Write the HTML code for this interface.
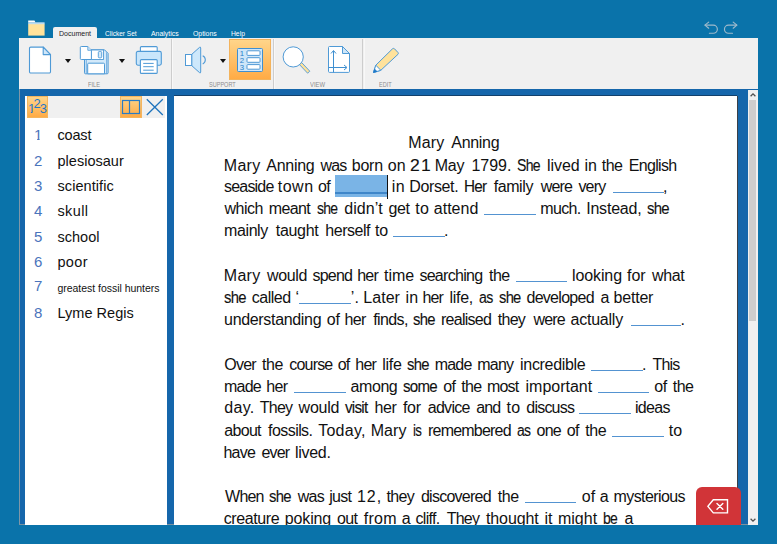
<!DOCTYPE html>
<html lang="en"><head><meta charset="utf-8"><title>Clicker - Mary Anning</title>
<style>
html,body{margin:0;padding:0}
body{width:777px;height:544px;overflow:hidden;background:#0a73aa;position:relative;font-family:"Liberation Sans",sans-serif}
*{box-sizing:border-box}
.abs{position:absolute}
#ribbon{position:absolute;left:19px;top:38px;width:739px;height:51px;background:#f0f0f0}
#main{position:absolute;left:18.600px;top:89px;width:739.400px;height:436.200px;background:#1566ab;border-left:1.300px solid #7f97a8;border-bottom:.8px solid #7890a0}
.tab{transform-origin:0 0;position:absolute;top:28.800px;font-size:7.5px;line-height:10px;color:#fff;white-space:pre}
#tabdoc{position:absolute;left:53px;top:27px;width:44px;height:12px;background:#f0f0f0;border-radius:2px 2px 0 0}
.glabel{position:absolute;top:80.900px;font-size:6.800px;line-height:8px;color:#8c8c8c;white-space:pre;transform-origin:0 0}
.sep{position:absolute;top:38.600px;width:2.500px;height:50.400px;border-left:1.500px solid #cdcdcd;border-right:1px solid #f8f8f8}
.dd{position:absolute;top:59px;width:0;height:0;border-left:3px solid transparent;border-right:3px solid transparent;border-top:4px solid #111}
#obtn{position:absolute;left:229px;top:38.900px;width:42.200px;height:41.500px;background:linear-gradient(#ffd58a,#ffab45);border:1px solid #f3b35c}
#panel{position:absolute;left:24.600px;top:96px;width:142.400px;height:428.600px;background:#fff;overflow:hidden}
#phead{position:absolute;left:2.400px;top:0;width:138px;height:21.700px;background:#f0f0f0}
.ob{position:absolute;top:0;height:21.700px;background:linear-gradient(#ffd58a,#ffab45);border:1px solid #f5b55e}
#page{position:absolute;left:174.400px;top:95px;width:562.900px;height:429.600px;background:#fff;overflow:hidden;box-shadow:inset 0 1px 0 #12406b}
#pshadow{position:absolute;left:737.300px;top:96px;width:1.200px;height:428.600px;background:#3a4048}
#sb{position:absolute;left:747.600px;top:89.700px;width:10.400px;height:434.900px;background:#f0f0f0}
#thumb{position:absolute;left:1px;top:10px;width:7px;height:221px;background:#cdcdcd}
.t{position:absolute;white-space:pre;font-size:16px;line-height:20px;color:#111;transform-origin:0 0}
.b{position:absolute;height:1.400px;background:#5393d1}
.sel{position:absolute;height:21.5px;background:#7ab4e6}
.cur{position:absolute;width:1.3px;height:24px;background:#111}
.n{position:absolute;left:9.100px;width:9px;text-align:center;font-size:15px;line-height:18px;color:#4a74bc}
.n1{clip-path:polygon(0 0,9px 0,9px 12.900px,5.900px 12.900px,5.900px 18px,3.500px 18px,3.500px 12.900px,0 12.900px)}
.one{position:absolute;left:.9px;top:4.500px;font-size:13px;line-height:16px;color:#1f78c8;clip-path:polygon(0 0,8px 0,8px 11.400px,4.700px 11.400px,4.700px 16px,3px 16px,3px 11.400px,0 11.400px)}
.w{position:absolute;left:32.900px;white-space:pre;line-height:18px;color:#111}
#del{position:absolute;left:696px;top:487px;width:45px;height:38px;background:#d13438;border-radius:6px 6px 0 0}
</style></head><body>

<!-- folder icon -->
<svg class="abs" style="left:27px;top:20px" width="19" height="17" viewBox="0 0 19 17">
<rect x="1.200" y="3.800" width="16.400" height="11.800" fill="#ffe29b"/>
<path d="M1.200 0.600h6.300l1 1.800H1.200z" fill="#fff"/>
<rect x="1.200" y="2.300" width="16.400" height="1.900" fill="#b9dcf2"/>
</svg>

<div id="tabdoc"></div>
<span class="tab" style="left:59.2px;color:#1c1c1c;transform:scaleX(.936)">Document</span>
<span class="tab" style="left:105.3px;transform:scaleX(.874)">Clicker Set</span>
<span class="tab" style="left:151px;transform:scaleX(.923)">Analytics</span>
<span class="tab" style="left:193px;transform:scaleX(.917)">Options</span>
<span class="tab" style="left:230.8px;transform:scaleX(.900)">Help</span>

<!-- undo / redo -->
<svg class="abs" style="left:703px;top:20px" width="36" height="15" viewBox="0 0 36 15" fill="none" stroke="#9fbacb" stroke-width="1.150" stroke-linecap="round" stroke-linejoin="round">
<path d="M5.700 2.100 L1.900 5.100 L5.700 8.200"/><path d="M2.100 5.100 H10.300 A4.050 4.050 0 0 1 10.300 13.200 H6.400"/>
<path d="M30.200 2.100 L33.900 5.100 L30.200 8.200"/><path d="M33.700 5.100 H25.500 A4.050 4.050 0 0 0 25.500 13.200 H29.500"/>
</svg>

<div id="ribbon"></div>
<div id="main"></div>

<!-- RIBBON ICONS -->
<!-- new document -->
<svg class="abs" style="left:28px;top:46px" width="24" height="28" viewBox="0 0 24 28">
<path d="M2.700 1.100H15.200l7.300 7.500V25.800a1.200 1.200 0 0 1-1.200 1.200H2.700a1.200 1.200 0 0 1-1.200-1.200V2.300a1.200 1.200 0 0 1 1.200-1.200z" fill="#fff" stroke="#4f9ad6" stroke-width="1.100"/>
<path d="M15.200 1.100V8.600H22.500z" fill="#cfe6f8" stroke="#4f9ad6" stroke-width="1.100" stroke-linejoin="round"/>
</svg>
<div class="dd" style="left:64.500px;top:59.200px"></div>
<!-- save -->
<svg class="abs" style="left:79px;top:45px" width="31" height="30" viewBox="0 0 31 30">
<path d="M5.500 4.800H25.500l3.600 3.600V27.800a1 1 0 0 1-1 1H6.500a1 1 0 0 1-1-1z" fill="#d3e9fa" stroke="#4f9ad6" stroke-width="1" stroke-linejoin="round"/>
<path d="M27.600 7.500V28.500" stroke="#4f9ad6" stroke-width=".7" fill="none"/>
<path d="M7.300 14.500V28.500" stroke="#4f9ad6" stroke-width=".7" fill="none"/>
<path d="M8.700 28.800V19.200a1 1 0 0 1 1-1H24.500a1 1 0 0 1 1 1V28.800z" fill="#fff" stroke="#4f9ad6"/>
<rect x="12.200" y="5" width="12.300" height="9.500" fill="#fff" stroke="#4f9ad6" stroke-width=".9"/>
<rect x="19.300" y="6.500" width="3.400" height="6.300" rx="1" fill="#d3e9fa" stroke="#4f9ad6" stroke-width=".9"/>
<path d="M2.300 1.500H8.800l3.600 3.800V14.500H2.300a1 1 0 0 1-1-1V2.500a1 1 0 0 1 1-1z" fill="#fff" stroke="#4f9ad6" stroke-linejoin="round"/>
<path d="M8.800 1.500V5.300H12.400" fill="#d3e9fa" stroke="#4f9ad6" stroke-width=".8"/>
</svg>
<div class="dd" style="left:118.700px"></div>
<!-- printer -->
<svg class="abs" style="left:135px;top:45px" width="29" height="30" viewBox="0 0 29 30">
<rect x="5.400" y="1.600" width="16.800" height="8" rx="1" fill="#fff" stroke="#4f9ad6" stroke-width="1.100"/>
<rect x="1.300" y="6.400" width="25" height="13.800" rx="1.600" fill="#c9e6fb" stroke="#4f9ad6" stroke-width="1.100"/>
<rect x="5.400" y="14.600" width="16.800" height="13.800" rx="1" fill="#fff" stroke="#4f9ad6" stroke-width="1.100"/>
<path d="M8.200 18.400h10.500M8.200 21.700h10.500M8.200 25.200h10.500" stroke="#4f9ad6" stroke-width="1"/>
</svg>
<div class="sep" style="left:170.900px"></div>
<!-- speaker -->
<svg class="abs" style="left:184px;top:46px" width="24" height="28" viewBox="0 0 24 28">
<path d="M7.700 8.400 L15.600 1.300 Q16.700 0.700 16.700 2 V26 Q16.700 27.300 15.600 26.700 L7.700 19.600z" fill="#cde8fb" stroke="#4f9ad6" stroke-linejoin="round"/>
<rect x="1.500" y="8.500" width="6.200" height="11" fill="#fff" stroke="#4f9ad6"/>
<path d="M18.700 9.700 A4.600 4.600 0 0 1 18.700 18" fill="none" stroke="#4f9ad6" stroke-width="1.100"/>
</svg>
<div class="dd" style="left:219.500px"></div>
<div id="obtn"></div>
<!-- numbered list icon -->
<svg class="abs" style="left:236px;top:47px" width="28" height="26" viewBox="0 0 28 26">
<rect x="1.500" y="1.500" width="25" height="23" rx="1" fill="#cfe6f8" stroke="#3f8fd0"/>
<rect x="11" y="3.800" width="13" height="4.600" rx=".800" fill="#fff" stroke="#3f8fd0" stroke-width=".9"/>
<rect x="11" y="10.700" width="13" height="4.600" rx=".800" fill="#fff" stroke="#3f8fd0" stroke-width=".9"/>
<rect x="11" y="17.600" width="13" height="4.600" rx=".800" fill="#fff" stroke="#3f8fd0" stroke-width=".9"/>
<text x="3.800" y="9" font-family="Liberation Sans, sans-serif" font-size="7.800" fill="#2a80c8">1</text>
<text x="3.800" y="15.900" font-family="Liberation Sans, sans-serif" font-size="7.800" fill="#2a80c8">2</text>
<text x="3.800" y="22.800" font-family="Liberation Sans, sans-serif" font-size="7.800" fill="#2a80c8">3</text>
</svg>
<div class="sep" style="left:272.500px"></div>
<!-- magnifier -->
<svg class="abs" style="left:282px;top:46px" width="29" height="28" viewBox="0 0 29 28">
<path d="M17.300 18.400 L19.500 16.400 L27.800 25.200 L25.600 27.200z" fill="#ffe29b" stroke="#4f9ad6" stroke-width=".9" stroke-linejoin="round"/>
<circle cx="11.200" cy="10.900" r="10.100" fill="#fff" stroke="#4f9ad6"/>
</svg>
<!-- page size -->
<svg class="abs" style="left:327px;top:45px" width="24" height="29" viewBox="0 0 24 29">
<path d="M2.500 1.500H15.500l7 7V26.400a1 1 0 0 1-1 1H2.500a1 1 0 0 1-1-1V2.500a1 1 0 0 1 1-1z" fill="#fff" stroke="#4f9ad6"/>
<path d="M15.500 1.500V8.500H22.500z" fill="#cfe6f8" stroke="#4f9ad6" stroke-linejoin="round"/>
<path d="M6.500 27.400V6 M4 8.500 L6.500 5.500 L9 8.500 M1.500 22.500H19.500 M17 20 L20 22.500 L17 25" fill="none" stroke="#3f8fd0" stroke-width="1"/>
</svg>
<div class="sep" style="left:362px"></div>
<!-- pencil -->
<svg class="abs" style="left:372px;top:47px" width="28" height="27" viewBox="0 0 28 27">
<path d="M1.500 25.500 L3.800 18.200 L20.500 1.800 Q21.500 1 22.500 1.800 L26 5.500 Q26.700 6.500 26 7.300 L8.800 23.300z" fill="#ffe29b" stroke="#4f9ad6" stroke-linejoin="round"/>
<path d="M1.500 25.500 L3.800 18.200 L8.800 23.300z" fill="#fff" stroke="#4f9ad6" stroke-linejoin="round"/>
<path d="M1.500 25.500 L2.600 22 L5 24.400z" fill="#1f78c8" stroke="#1f78c8" stroke-width=".6"/>
</svg>

<span class="glabel" style="left:88px;transform:scaleX(.840)">FILE</span>
<span class="glabel" style="left:208.800px;transform:scaleX(.815)">SUPPORT</span>
<span class="glabel" style="left:310px;transform:scaleX(.864)">VIEW</span>
<span class="glabel" style="left:379px;transform:scaleX(.814)">EDIT</span>

<!-- LEFT PANEL -->
<div id="panel">
<div id="phead">
<div class="ob" style="left:0;width:21.200px"></div>
<span class="one">1</span>
<svg class="abs" style="left:0;top:0" width="22" height="22" viewBox="0 0 22 22">
<text x="6.500" y="12.300" font-family="Liberation Sans, sans-serif" font-size="13" fill="#1f78c8">2</text>
<text x="12.700" y="17.200" font-family="Liberation Sans, sans-serif" font-size="13" fill="#1f78c8">3</text>
</svg>
<div class="ob" style="left:93px;width:22px"></div>
<svg class="abs" style="left:93px;top:0" width="22" height="22" viewBox="0 0 22 22" fill="none" stroke="#2a7cc4" stroke-width="1.200">
<rect x="2.500" y="4.500" width="17" height="13"/><path d="M9.500 4.500V17.500"/>
</svg>
<svg class="abs" style="left:118px;top:1px" width="20" height="20" viewBox="0 0 20 20" fill="none" stroke="#1f74bd" stroke-width="1.300">
<path d="M1.800 2.200 L17.800 18 M17.800 2.200 L1.800 18"/>
</svg>
</div>
<span class="n n1" style="top:30.20px">1</span> <span class="w" style="top:30.38px;font-size:14.5px;letter-spacing:-0.168px">coast</span>
<span class="n" style="top:55.60px">2</span> <span class="w" style="top:55.78px;font-size:14.5px;letter-spacing:0.017px">plesiosaur</span>
<span class="n" style="top:81.00px">3</span> <span class="w" style="top:81.18px;font-size:14.5px;letter-spacing:0.071px">scientific</span>
<span class="n" style="top:106.30px">4</span> <span class="w" style="top:106.48px;font-size:14.5px;letter-spacing:0.371px">skull</span>
<span class="n" style="top:131.70px">5</span> <span class="w" style="top:131.88px;font-size:14.5px;letter-spacing:0.016px">school</span>
<span class="n" style="top:157.10px">6</span> <span class="w" style="top:157.28px;font-size:14.5px;letter-spacing:0.323px">poor</span>
<span class="n" style="top:181.10px">7</span> <span class="w" style="top:182.66px;font-size:10.5px;letter-spacing:-0.033px">greatest fossil hunters</span>
<span class="n" style="top:207.90px">8</span> <span class="w" style="top:208.08px;font-size:14.5px;letter-spacing:0.024px">Lyme Regis</span>
</div>

<!-- PAGE -->
<div id="page">
<span class="t" style="left:233.95px;top:37.56px;letter-spacing:0.15px">Mary</span> <span class="t" style="left:276.90px;top:37.56px;letter-spacing:-0.31px">Anning</span>
<span class="t" style="left:49.45px;top:61.26px;letter-spacing:0.25px">Mary</span> <span class="t" style="left:91.90px;top:61.26px;letter-spacing:-0.29px">Anning</span> <span class="t" style="left:146.00px;top:61.26px;letter-spacing:-0.80px">was</span> <span class="t" style="left:177.40px;top:61.26px;letter-spacing:-0.23px">born</span> <span class="t" style="left:213.45px;top:61.26px;letter-spacing:0.10px">on</span> <span class="t" style="left:235.68px;top:61.26px;transform:scaleX(1.095);-webkit-text-stroke:.12px #111;letter-spacing:1.20px">21</span> <span class="t" style="left:260.35px;top:61.26px;letter-spacing:-0.25px">May</span> <span class="t" style="left:297.05px;top:61.26px;letter-spacing:-0.02px">1799.</span> <span class="t" style="left:342.54px;top:61.26px;transform:scaleX(0.878);-webkit-text-stroke:.12px #111;letter-spacing:-0.80px">She</span> <span class="t" style="left:372.70px;top:61.26px;letter-spacing:-0.08px">lived</span> <span class="t" style="left:410.20px;top:61.26px;letter-spacing:-0.20px">in</span> <span class="t" style="left:427.45px;top:61.26px;letter-spacing:-0.53px">the</span> <span class="t" style="left:454.25px;top:61.26px;letter-spacing:-0.66px">English</span>
<span class="t" style="left:49.60px;top:82.26px;letter-spacing:-0.80px">seaside</span> <span class="t" style="left:103.35px;top:82.26px;letter-spacing:0.50px">town</span> <span class="t" style="left:143.65px;top:82.26px;letter-spacing:-0.60px">of</span> <i class="sel" style="left:161.10px;top:80.00px;width:51.50px"></i><i class="b" style="left:160.70px;top:97.20px;width:51.90px;background:#3f86c9"></i><i class="cur" style="left:212.30px;top:80.00px"></i> <span class="t" style="left:217.40px;top:82.26px;letter-spacing:0.40px">in</span> <span class="t" style="left:234.85px;top:82.26px;letter-spacing:-0.37px">Dorset.</span> <span class="t" style="left:289.91px;top:82.26px;transform:scaleX(0.954);-webkit-text-stroke:.12px #111;letter-spacing:-0.80px">Her</span> <span class="t" style="left:319.25px;top:82.26px;letter-spacing:-0.40px">family</span> <span class="t" style="left:366.30px;top:82.26px;letter-spacing:-0.80px">were</span> <span class="t" style="left:404.00px;top:82.26px;letter-spacing:-0.80px">very</span> <i class="b" style="left:438.40px;top:96.80px;width:51.10px"></i> <span class="t" style="left:488.70px;top:82.26px">,</span>
<span class="t" style="left:50.10px;top:104.26px;letter-spacing:-0.47px">which</span> <span class="t" style="left:94.40px;top:104.26px;letter-spacing:-0.64px">meant</span> <span class="t" style="left:142.46px;top:104.26px;transform:scaleX(0.873);-webkit-text-stroke:.12px #111;letter-spacing:-0.80px">she</span> <span class="t" style="left:169.85px;top:104.26px;letter-spacing:0.06px">didn’t</span> <span class="t" style="left:214.15px;top:104.26px;letter-spacing:-0.45px">get</span> <span class="t" style="left:240.75px;top:104.26px;letter-spacing:0.50px">to</span> <span class="t" style="left:259.45px;top:104.26px">attend</span> <i class="b" style="left:309.60px;top:118.80px;width:51.90px"></i> <span class="t" style="left:365.90px;top:104.26px;letter-spacing:-0.64px">much.</span> <span class="t" style="left:411.80px;top:104.26px;letter-spacing:-0.21px">Instead,</span> <span class="t" style="left:472.13px;top:104.26px;transform:scaleX(0.934);-webkit-text-stroke:.12px #111;letter-spacing:-0.80px">she</span>
<span class="t" style="left:49.70px;top:126.26px;letter-spacing:-0.41px">mainly</span> <span class="t" style="left:101.35px;top:126.26px;letter-spacing:-0.29px">taught</span> <span class="t" style="left:150.90px;top:126.26px;letter-spacing:-0.47px">herself</span> <span class="t" style="left:200.65px;top:126.26px;letter-spacing:-0.20px">to</span> <i class="b" style="left:219.00px;top:140.80px;width:51.50px"></i> <span class="t" style="left:269.60px;top:126.26px">.</span>
<span class="t" style="left:49.45px;top:171.26px;letter-spacing:0.25px">Mary</span> <span class="t" style="left:92.50px;top:171.26px;letter-spacing:-0.31px">would</span> <span class="t" style="left:138.10px;top:171.26px;letter-spacing:-0.80px">spend</span> <span class="t" style="left:182.80px;top:171.26px;letter-spacing:-0.80px">her</span> <span class="t" style="left:209.55px;top:171.26px;letter-spacing:0.02px">time</span> <span class="t" style="left:245.00px;top:171.26px;letter-spacing:-0.71px">searching</span> <span class="t" style="left:314.65px;top:171.26px;letter-spacing:-0.58px">the</span> <i class="b" style="left:341.20px;top:185.80px;width:51.60px"></i> <span class="t" style="left:397.60px;top:171.26px;letter-spacing:-0.11px">looking</span> <span class="t" style="left:452.65px;top:171.26px;letter-spacing:-0.07px">for</span> <span class="t" style="left:477.60px;top:171.26px;letter-spacing:-0.38px">what</span>
<span class="t" style="left:49.64px;top:193.26px;transform:scaleX(0.926);-webkit-text-stroke:.12px #111;letter-spacing:-0.80px">she</span> <span class="t" style="left:77.35px;top:193.26px;letter-spacing:-0.50px">called</span> <span class="t" style="left:121.10px;top:193.26px">‘</span> <i class="b" style="left:124.90px;top:207.80px;width:52.00px"></i> <span class="t" style="left:176.40px;top:193.26px;letter-spacing:0.20px">’.</span> <span class="t" style="left:188.85px;top:193.26px;letter-spacing:0.05px">Later</span> <span class="t" style="left:231.10px;top:193.26px;letter-spacing:0.20px">in</span> <span class="t" style="left:248.00px;top:193.26px;letter-spacing:-0.80px">her</span> <span class="t" style="left:275.10px;top:193.26px;letter-spacing:-0.30px">life,</span> <span class="t" style="left:304.34px;top:193.26px;transform:scaleX(0.884);-webkit-text-stroke:.12px #111;letter-spacing:-0.80px">as</span> <span class="t" style="left:324.24px;top:193.26px;transform:scaleX(0.921);-webkit-text-stroke:.12px #111;letter-spacing:-0.80px">she</span> <span class="t" style="left:352.05px;top:193.26px;letter-spacing:-0.71px">developed</span> <span class="t" style="left:426.05px;top:193.26px">a</span> <span class="t" style="left:439.10px;top:193.26px;letter-spacing:-0.19px">better</span>
<span class="t" style="left:49.70px;top:215.26px;letter-spacing:-0.33px">understanding</span> <span class="t" style="left:152.25px;top:215.26px;letter-spacing:-0.10px">of</span> <span class="t" style="left:170.20px;top:215.26px;letter-spacing:-0.70px">her</span> <span class="t" style="left:198.75px;top:215.26px;letter-spacing:-0.60px">finds,</span> <span class="t" style="left:238.64px;top:215.26px;transform:scaleX(0.926);-webkit-text-stroke:.12px #111;letter-spacing:-0.80px">she</span> <span class="t" style="left:266.50px;top:215.26px;letter-spacing:-0.71px">realised</span> <span class="t" style="left:323.25px;top:215.26px;letter-spacing:-0.67px">they</span> <span class="t" style="left:359.00px;top:215.26px;letter-spacing:-0.80px">were</span> <span class="t" style="left:396.15px;top:215.26px;letter-spacing:-0.23px">actually</span> <i class="b" style="left:456.20px;top:229.80px;width:50.90px"></i> <span class="t" style="left:506.10px;top:215.26px">.</span>
<span class="t" style="left:49.95px;top:260.26px;letter-spacing:-0.80px">Over</span> <span class="t" style="left:87.55px;top:260.26px;letter-spacing:-0.38px">the</span> <span class="t" style="left:114.85px;top:260.26px;letter-spacing:-0.80px">course</span> <span class="t" style="left:163.25px;top:260.26px;letter-spacing:-0.80px">of</span> <span class="t" style="left:180.90px;top:260.26px;letter-spacing:-0.80px">her</span> <span class="t" style="left:207.80px;top:260.26px;letter-spacing:-0.28px">life</span> <span class="t" style="left:232.44px;top:260.26px;transform:scaleX(0.926);-webkit-text-stroke:.12px #111;letter-spacing:-0.80px">she</span> <span class="t" style="left:260.30px;top:260.26px;letter-spacing:-0.80px">made</span> <span class="t" style="left:302.90px;top:260.26px;letter-spacing:-0.80px">many</span> <span class="t" style="left:345.70px;top:260.26px;letter-spacing:-0.32px">incredible</span> <i class="b" style="left:416.20px;top:274.80px;width:52.30px"></i> <span class="t" style="left:467.70px;top:260.26px">.</span> <span class="t" style="left:478.05px;top:260.26px;letter-spacing:-0.80px">This</span>
<span class="t" style="left:49.70px;top:282.26px;letter-spacing:-0.80px">made</span> <span class="t" style="left:91.90px;top:282.26px;letter-spacing:-0.70px">her</span> <i class="b" style="left:119.30px;top:296.80px;width:51.90px"></i> <span class="t" style="left:176.15px;top:282.26px;letter-spacing:-0.42px">among</span> <span class="t" style="left:228.33px;top:282.26px;transform:scaleX(0.941);-webkit-text-stroke:.12px #111;letter-spacing:-0.80px">some</span> <span class="t" style="left:268.85px;top:282.26px;letter-spacing:-0.60px">of</span> <span class="t" style="left:286.85px;top:282.26px;letter-spacing:-0.68px">the</span> <span class="t" style="left:312.60px;top:282.26px;letter-spacing:-0.80px">most</span> <span class="t" style="left:351.20px;top:282.26px;letter-spacing:-0.01px">important</span> <i class="b" style="left:423.80px;top:296.80px;width:51.00px"></i> <span class="t" style="left:479.85px;top:282.26px;letter-spacing:-0.50px">of</span> <span class="t" style="left:498.35px;top:282.26px;letter-spacing:-0.52px">the</span>
<span class="t" style="left:49.95px;top:303.26px;letter-spacing:0.27px">day.</span> <span class="t" style="left:85.45px;top:303.26px;letter-spacing:-0.80px">They</span> <span class="t" style="left:124.20px;top:303.26px;letter-spacing:-0.24px">would</span> <span class="t" style="left:170.70px;top:303.26px;transform:scaleX(0.951);-webkit-text-stroke:.12px #111;letter-spacing:-0.80px">visit</span> <span class="t" style="left:200.00px;top:303.26px;letter-spacing:-0.40px">her</span> <span class="t" style="left:228.55px;top:303.26px;letter-spacing:-0.28px">for</span> <span class="t" style="left:253.35px;top:303.26px;letter-spacing:-0.71px">advice</span> <span class="t" style="left:301.75px;top:303.26px;letter-spacing:-0.80px">and</span> <span class="t" style="left:332.15px;top:303.26px;letter-spacing:0.20px">to</span> <span class="t" style="left:351.95px;top:303.26px;letter-spacing:-0.80px">discuss</span> <i class="b" style="left:404.60px;top:317.80px;width:51.70px"></i> <span class="t" style="left:460.60px;top:303.26px;letter-spacing:-0.69px">ideas</span>
<span class="t" style="left:49.95px;top:326.26px;letter-spacing:-0.71px">about</span> <span class="t" style="left:93.65px;top:326.26px;letter-spacing:-0.56px">fossils.</span> <span class="t" style="left:143.75px;top:326.26px;letter-spacing:0.29px">Today,</span> <span class="t" style="left:196.25px;top:326.26px;letter-spacing:0.12px">Mary</span> <span class="t" style="left:238.87px;top:326.26px;transform:scaleX(0.826);-webkit-text-stroke:.12px #111;letter-spacing:-0.80px">is</span> <span class="t" style="left:253.70px;top:326.26px;letter-spacing:-0.80px">remembered</span> <span class="t" style="left:342.75px;top:326.26px;transform:scaleX(0.871);-webkit-text-stroke:.12px #111;letter-spacing:-0.80px">as</span> <span class="t" style="left:362.15px;top:326.26px;letter-spacing:-0.80px">one</span> <span class="t" style="left:392.25px;top:326.26px;letter-spacing:-0.50px">of</span> <span class="t" style="left:410.85px;top:326.26px;letter-spacing:-0.43px">the</span> <i class="b" style="left:437.70px;top:340.80px;width:51.50px"></i> <span class="t" style="left:494.25px;top:326.26px;letter-spacing:0.20px">to</span>
<span class="t" style="left:49.10px;top:348.26px;letter-spacing:-0.80px">have</span> <span class="t" style="left:87.05px;top:348.26px;letter-spacing:-0.80px">ever</span> <span class="t" style="left:120.70px;top:348.26px;letter-spacing:-0.32px">lived.</span>
<span class="t" style="left:50.70px;top:392.26px;letter-spacing:-0.80px">When</span> <span class="t" style="left:94.94px;top:392.26px;transform:scaleX(0.926);-webkit-text-stroke:.12px #111;letter-spacing:-0.80px">she</span> <span class="t" style="left:123.40px;top:392.26px;letter-spacing:-0.80px">was</span> <span class="t" style="left:154.80px;top:392.26px;letter-spacing:-0.75px">just</span> <span class="t" style="left:182.65px;top:392.26px;letter-spacing:0.90px">12,</span> <span class="t" style="left:212.05px;top:392.26px;letter-spacing:-0.67px">they</span> <span class="t" style="left:246.55px;top:392.26px;letter-spacing:-0.75px">discovered</span> <span class="t" style="left:323.25px;top:392.26px;letter-spacing:-0.32px">the</span> <i class="b" style="left:350.30px;top:406.80px;width:51.80px"></i> <span class="t" style="left:407.45px;top:392.26px;letter-spacing:-0.10px">of</span> <span class="t" style="left:425.35px;top:392.26px">a</span> <span class="t" style="left:439.10px;top:392.26px;letter-spacing:-0.58px">mysterious</span>
<span class="t" style="left:49.35px;top:414.26px;letter-spacing:-0.39px">creature</span> <span class="t" style="left:110.40px;top:414.26px;letter-spacing:-0.14px">poking</span> <span class="t" style="left:162.55px;top:414.26px;letter-spacing:-0.65px">out</span> <span class="t" style="left:189.45px;top:414.26px;letter-spacing:0.25px">from</span> <span class="t" style="left:227.25px;top:414.26px">a</span> <span class="t" style="left:241.05px;top:414.26px;letter-spacing:-0.68px">cliff.</span> <span class="t" style="left:272.35px;top:414.26px;letter-spacing:-0.80px">They</span> <span class="t" style="left:311.55px;top:414.26px;letter-spacing:-0.10px">thought</span> <span class="t" style="left:370.20px;top:414.26px;letter-spacing:-0.20px">it</span> <span class="t" style="left:383.60px;top:414.26px">might</span> <span class="t" style="left:429.02px;top:414.26px;transform:scaleX(0.875);-webkit-text-stroke:.12px #111;letter-spacing:-0.80px">be</span> <span class="t" style="left:450.15px;top:414.26px">a</span>
</div>
<div id="pshadow"></div>

<!-- scrollbar -->
<div id="sb"><div id="thumb"></div>
<svg class="abs" style="left:0;top:0" width="10" height="10" viewBox="0 0 10 10" fill="none" stroke="#505050" stroke-width="1.300"><path d="M2.600 6.300 L5 3.900 L7.400 6.300"/></svg>
<svg class="abs" style="left:0;top:425px" width="10" height="10" viewBox="0 0 10 10" fill="none" stroke="#505050" stroke-width="1.300"><path d="M2.600 3.700 L5 6.100 L7.400 3.700"/></svg>
</div>

<!-- delete button -->
<div id="del">
<svg class="abs" style="left:10px;top:12.400px" width="24" height="16" viewBox="0 0 24 16" fill="none" stroke="#fff" stroke-width="1.400" stroke-linejoin="miter" stroke-linecap="round">
<path d="M7.300 0.800H21.500V13.900H7.300L1.900 7.350z"/>
<path d="M11 4.500 L16.800 10.300 M16.800 4.500 L11 10.300"/>
</svg>
</div>

</body></html>
